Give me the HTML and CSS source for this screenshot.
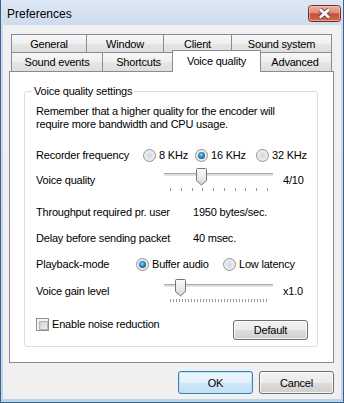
FILE: index.html
```html
<!DOCTYPE html>
<html lang="en">
<head>
<meta charset="utf-8">
<title>Preferences</title>
<link rel="stylesheet" href="styles.css">
</head>
<body>
<div class="window">
  <div class="titlebar">
    <span class="title">Preferences</span>
    <div class="close">
      <svg width="33" height="17" viewBox="0 0 33 17">
        <defs>
          <linearGradient id="closeBg" x1="0" y1="0" x2="0" y2="1">
            <stop offset="0" stop-color="#eeb5a6"/>
            <stop offset="0.45" stop-color="#dc8b77"/>
            <stop offset="0.52" stop-color="#c4523a"/>
            <stop offset="1" stop-color="#d06b4f"/>
          </linearGradient>
        </defs>
        <rect x="0.5" y="0.5" width="32" height="16" rx="3" fill="url(#closeBg)" stroke="#7b2c1d"/>
        <rect x="1.5" y="1.5" width="30" height="14" rx="2" fill="none" stroke="#f6d3c9" stroke-opacity="0.55"/>
        <path d="M12 4.5 L21 12.5 M21 4.5 L12 12.5" stroke="#4d3a36" stroke-opacity="0.75" stroke-width="4.4"/>
        <path d="M12 4.5 L21 12.5 M21 4.5 L12 12.5" stroke="#ffffff" stroke-width="2.6"/>
      </svg>
    </div>
  </div>
  <div class="client">
    <div class="tabctl">
      <div class="tabrow back">
        <div class="tab t-general">General</div>
        <div class="tab t-window">Window</div>
        <div class="tab t-client">Client</div>
        <div class="tab t-sound">Sound system</div>
      </div>
      <div class="tabrow front">
        <div class="tab t-events">Sound events</div>
        <div class="tab t-shortcuts">Shortcuts</div>
        <div class="tab selected t-voice">Voice quality</div>
        <div class="tab t-advanced">Advanced</div>
      </div>
      <div class="panel">
        <fieldset class="group">
          <legend>Voice quality settings</legend>
          <p class="intro">Remember that a higher quality for the encoder will<br>require more bandwidth and CPU usage.</p>

          <div class="row r-freq">
            <span class="label l-freq">Recorder frequency</span>
            <span class="opt o-8"><span class="rb"></span>8 KHz</span>
            <span class="opt o-16"><span class="rb on"></span>16 KHz</span>
            <span class="opt"><span class="rb"></span>32 KHz</span>
          </div>

          <div class="row r-slider r-quality">
            <span class="label l-slider">Voice quality</span>
            <div class="slider">
              <div class="track"></div>
              <div class="ticks ticks-10"><i></i><i></i><i></i><i></i><i></i><i></i><i></i><i></i><i></i><i></i></div>
              <svg class="thumb" style="left:32px" width="11" height="18" viewBox="0 0 11 18"><defs><linearGradient id="thumbBg" x1="0" y1="0" x2="0" y2="1"><stop offset="0" stop-color="#fbfbfb"/><stop offset="0.5" stop-color="#ececec"/><stop offset="1" stop-color="#d4d4d4"/></linearGradient></defs><path d="M1.5 0.5 H9.5 Q10.5 0.5 10.5 1.5 V12.5 L5.5 17 L0.5 12.5 V1.5 Q0.5 0.5 1.5 0.5 Z" fill="url(#thumbBg)" stroke="#747474"/></svg>
            </div>
            <span class="value">4/10</span>
          </div>

          <div class="row r-through">
            <span class="label l-info">Throughput required pr. user</span>
            <span>1950 bytes/sec.</span>
          </div>

          <div class="row r-delay">
            <span class="label l-info">Delay before sending packet</span>
            <span>40 msec.</span>
          </div>

          <div class="row r-play">
            <span class="label l-play">Playback-mode</span>
            <span class="opt o-buffer"><span class="rb on"></span>Buffer audio</span>
            <span class="opt"><span class="rb"></span>Low latency</span>
          </div>

          <div class="row r-slider r-gain">
            <span class="label l-slider">Voice gain level</span>
            <div class="slider">
              <div class="track"></div>
              <div class="ticks ticks-dense"></div>
              <svg class="thumb" style="left:11px" width="11" height="18" viewBox="0 0 11 18"><path d="M1.5 0.5 H9.5 Q10.5 0.5 10.5 1.5 V12.5 L5.5 17 L0.5 12.5 V1.5 Q0.5 0.5 1.5 0.5 Z" fill="url(#thumbBg)" stroke="#747474"/></svg>
            </div>
            <span class="value">x1.0</span>
          </div>

          <div class="row r-bottom">
            <span class="check"><span class="cb"></span>Enable noise reduction</span>
            <div class="btn btn-default">Default</div>
          </div>
        </fieldset>
      </div>
    </div>
    <div class="dlgbuttons">
      <div class="btn primary">OK</div>
      <div class="btn">Cancel</div>
    </div>
  </div>
</div>
</body>
</html>
```

FILE: styles.css
```css
* { box-sizing: border-box; }
html, body { margin: 0; padding: 0; }
body {
  width: 344px;
  height: 403px;
  overflow: hidden;
  font-family: "Liberation Sans", Arial, sans-serif;
  font-size: 11px;
  letter-spacing: -0.2px;
  color: #000;
  background: #fff;
}

.window {
  width: 344px;
  height: 403px;
  display: flex;
  flex-direction: column;
  border: 1px solid #41608a;
  border-top: none;
  padding: 0 2px 3px 2px;
  background: linear-gradient(to bottom, #dde8f5 0, #cddced 25px, #bcd3ec 100%);
}

.titlebar {
  height: 25px;
  display: flex;
  align-items: flex-start;
  justify-content: space-between;
  padding-left: 4px;
  flex: none;
}
.title {
  font-size: 12px;
  letter-spacing: 0;
  line-height: 14px;
  margin-top: 7px;
}
.close {
  margin-top: 5px;
  width: 33px;
  height: 17px;
}
.close svg { display: block; }

.client {
  flex: 1;
  background: #f0f0f0;
  padding: 9px 7px 0 6px;
  display: flex;
  flex-direction: column;
}

/* ---------- tabs ---------- */
.tabctl {
  display: flex;
  flex-direction: column;
}
.tabrow {
  display: flex;
  align-items: flex-start;
  padding-left: 2px;
}
.tab {
  border: 1px solid #898c95;
  border-bottom: none;
  margin-right: -1px;
  background: linear-gradient(to bottom, #f7f7f7 0%, #efefef 50%, #e6e6e6 51%, #dedede 100%);
  display: flex;
  align-items: center;
  justify-content: center;
  white-space: nowrap;
}
.back .tab { height: 18px; }
.front .tab { height: 19px; }

.t-general { width: 76px; }
.t-window { width: 78px; }
.t-client { width: 69px; }
.t-sound { width: 101px; }

.t-events { width: 92px; }
.t-shortcuts { width: 73px; }
.t-voice { width: 89px; }
.t-advanced { width: 74px; }

.front .tab.selected {
  position: relative;
  z-index: 2;
  height: 22px;
  margin-top: -2px;
  margin-bottom: -1px;
  margin-left: -2px;
  margin-right: -3px;
  background: #fff;
  padding-bottom: 2px;
}

.panel {
  height: 292px;
  border: 1px solid #898c95;
  background: #fff;
  padding: 12px 15px 15px 14px;
  display: flex;
  flex-direction: column;
}

/* ---------- group box ---------- */
.group {
  flex: 1;
  margin: 0;
  min-width: 0;
  border: 1px solid #d5dfe5;
  border-radius: 3px;
  padding: 0 0 0 11px;
  display: flex;
  flex-direction: column;
}
.group legend {
  line-height: 14px;
  padding: 0 2px;
  margin-left: -4px;
}

.intro {
  margin: 7px 0 0 0;
  line-height: 13px;
}

.row {
  display: flex;
  align-items: center;
  height: 16px;
  white-space: nowrap;
}
.r-freq { margin-top: 16px; }
.r-quality { margin-top: 5px; }
.r-through { margin-top: 12px; }
.r-delay { margin-top: 10px; }
.r-play { margin-top: 10px; }
.r-gain { margin-top: 7px; }
.r-slider { height: 24px; }
.r-bottom {
  margin-top: 15px;
  height: 22px;
  align-items: flex-start;
}

.label { display: block; flex: none; }
.l-freq { width: 107px; }
.l-slider { width: 128px; }
.l-info { width: 157px; }
.l-play { width: 100px; }

/* ---------- radio buttons ---------- */
.opt {
  display: flex;
  align-items: center;
  flex: none;
}
.o-8 { width: 52px; }
.o-16 { width: 61px; }
.o-buffer { width: 87px; }

.rb {
  width: 13px;
  height: 13px;
  border-radius: 50%;
  border: 1px solid #8f9194;
  background: radial-gradient(circle at 50% 50%, #d3d5d8 0, #e6e7e8 45%, #f7f7f7 100%);
  margin-right: 3px;
  position: relative;
  flex: none;
}
.rb.on::after {
  content: "";
  position: absolute;
  left: 2px;
  top: 2px;
  width: 7px;
  height: 7px;
  border-radius: 50%;
  background: radial-gradient(circle at 45% 40%, #9fdcff 0, #3a8fcc 35%, #1a5a8e 75%, #0d3f6b 100%);
}

/* ---------- sliders ---------- */
.slider {
  position: relative;
  width: 109px;
  height: 24px;
  flex: none;
}
.track {
  margin-top: 5px;
  height: 3px;
  border-top: 1px solid #a9aaab;
  border-bottom: 1px solid #e3e3e3;
  background: #d9dadb;
}
.ticks {
  margin-top: 12px;
  margin-left: 6px;
  height: 3px;
  width: 98px;
}
.ticks-10 {
  display: flex;
  justify-content: space-between;
}
.ticks-10 i {
  display: block;
  width: 1px;
  height: 3px;
  background: #9a9a9a;
}
.ticks-dense {
  background: repeating-linear-gradient(to right, #9a9a9a 0, #9a9a9a 1px, transparent 1px, transparent 3px);
}
.thumb {
  position: absolute;
  top: 0;
  display: block;
}
.value {
  margin-left: 10px;
}

/* ---------- checkbox ---------- */
.check {
  display: flex;
  align-items: center;
  line-height: 13px;
}
.cb {
  width: 13px;
  height: 13px;
  border: 1px solid #8e8f8f;
  background: #f4f4f4;
  padding: 2px;
  margin-right: 3px;
  flex: none;
}
.cb::after {
  content: "";
  display: block;
  width: 7px;
  height: 7px;
  border: 1px solid #b4b8bd;
  background: linear-gradient(135deg, #cdd1d6 0%, #eeeff0 100%);
}

/* ---------- buttons ---------- */
.btn {
  width: 75px;
  height: 23px;
  border: 1px solid #707070;
  border-radius: 3px;
  background: linear-gradient(to bottom, #f2f2f2 0%, #ebebeb 50%, #dddddd 51%, #cfcfcf 100%);
  box-shadow: inset 0 0 0 1px rgba(255, 255, 255, 0.75);
  display: flex;
  align-items: center;
  justify-content: center;
  flex: none;
}
.btn-default {
  height: 20px;
  margin-top: 2px;
  margin-left: auto;
  margin-right: 9px;
}
.btn.primary {
  border-color: #3c7fb1;
  background: linear-gradient(to bottom, #eef7fd 0%, #e2f1fb 50%, #cfe8f8 51%, #c2e0f4 100%);
  box-shadow: inset 0 0 0 1px rgba(180, 228, 250, 0.9);
}

.dlgbuttons {
  display: flex;
  justify-content: flex-end;
  gap: 6px;
  margin-top: 8px;
}
```
